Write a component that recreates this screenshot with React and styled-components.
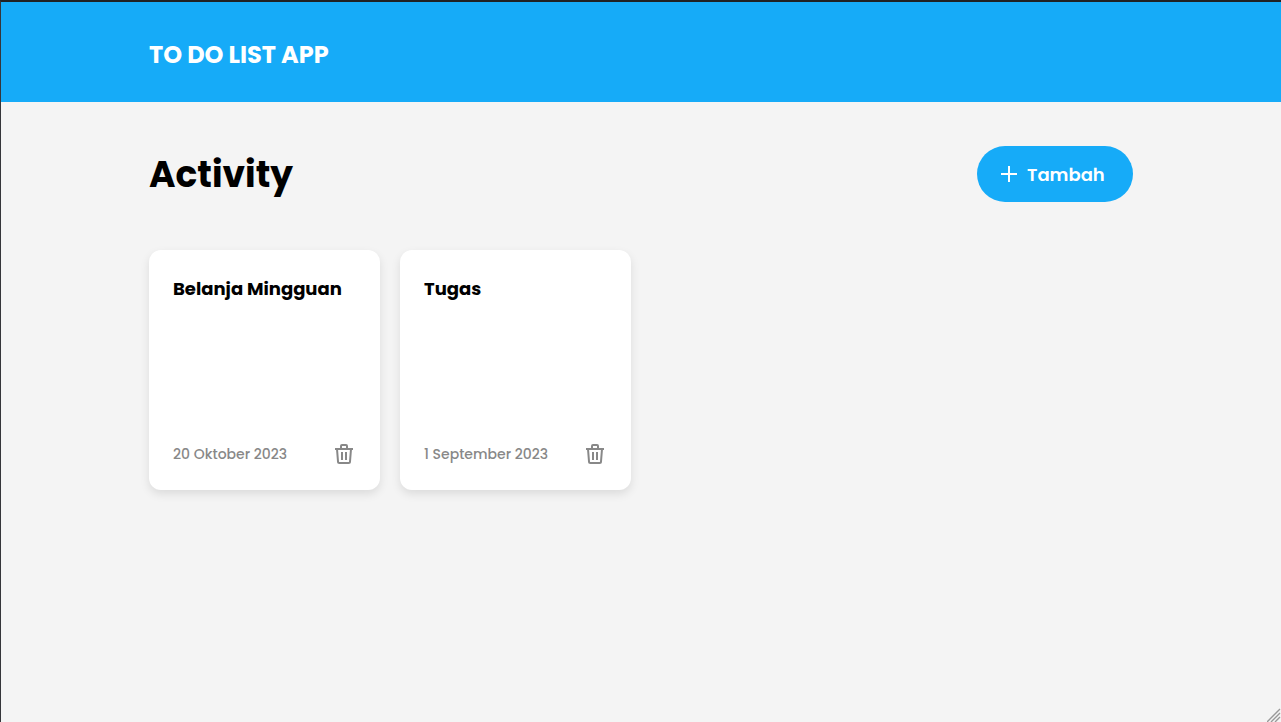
import React from "react";
import styled, { createGlobalStyle } from "styled-components";

const GlobalStyle = createGlobalStyle`
  * { box-sizing: border-box; }
  body {
    margin: 0;
    background: #f4f4f4;
    color: #000;
    font-family: Poppins, Inter, "Open Sans", sans-serif;
  }
`;

const Page = styled.div`
  position: relative;
  min-height: 100vh;
  border-top: 2px solid #202124;
  border-left: 1px solid #35363a;
`;

const Header = styled.header`
  display: flex;
  align-items: center;
  height: 100px;
  padding-top: 6px;
  background: #16abf8;
`;

const Container = styled.div`
  width: 100%;
  max-width: 1000px;
  margin: 0 auto;
  padding: 0 8px;
`;

const Brand = styled.h2`
  margin: 0;
  color: #fff;
  font-size: 24px;
  line-height: 36px;
  font-weight: 700;
`;

const Toolbar = styled.div`
  display: flex;
  align-items: center;
  justify-content: space-between;
  padding: 44px 0 48px;
`;

const Title = styled.h1`
  margin: 0;
  font-size: 36px;
  line-height: 55px;
  font-weight: 700;
`;

const AddButton = styled.button`
  display: flex;
  align-items: center;
  gap: 6px;
  min-width: 156px;
  height: 56px;
  padding: 0 20px;
  border: 0;
  border-radius: 28px;
  background: #16abf8;
  color: #fff;
  font-family: inherit;
  font-size: 18px;
  line-height: 27px;
  font-weight: 600;
  cursor: pointer;
`;

const CardGrid = styled.main`
  display: grid;
  grid-template-columns: repeat(4, 1fr);
  gap: 20px;
`;

const Card = styled.article`
  display: flex;
  flex-direction: column;
  justify-content: space-between;
  height: 240px;
  padding: 24px;
  border-radius: 12px;
  background: #fff;
  box-shadow: 0 4px 10px rgba(0, 0, 0, 0.1);
`;

const CardTitle = styled.h4`
  margin: 0;
  font-size: 18px;
  line-height: 30px;
  font-weight: 700;
  white-space: nowrap;
`;

const CardFooter = styled.footer`
  display: flex;
  align-items: center;
  justify-content: space-between;
`;

const CardDate = styled.time`
  color: #888;
  font-size: 14px;
  line-height: 24px;
  font-weight: 500;
  white-space: nowrap;
`;

const IconButton = styled.button`
  display: flex;
  padding: 0;
  border: 0;
  background: none;
  color: #888;
  cursor: pointer;
`;

const ResizeGrip = styled.svg`
  position: absolute;
  right: 0;
  bottom: 0;
`;

const PlusIcon = () => (
  <svg width="24" height="24" viewBox="0 0 24 24" fill="none" stroke="currentColor" strokeWidth="2" aria-hidden="true">
    <path d="M12 4v16M4 12h16" />
  </svg>
);

const TrashIcon = () => (
  <svg width="24" height="24" viewBox="0 0 24 24" fill="none" stroke="currentColor" strokeWidth="2" aria-hidden="true">
    <path d="M3 7h18M9 7V4a1 1 0 0 1 1-1h4a1 1 0 0 1 1 1v3M5 7l1 12.5a1.5 1.5 0 0 0 1.5 1.5h9a1.5 1.5 0 0 0 1.5-1.5L19 7M10 10v8M14 10v8" />
  </svg>
);

const activities = [
  { title: "Belanja Mingguan", date: "20 Oktober 2023", iso: "2023-10-20" },
  { title: "Tugas", date: "1 September 2023", iso: "2023-09-01" },
];

export default function App() {
  return (
    <Page>
      <GlobalStyle />
      <Header>
        <Container>
          <Brand>TO DO LIST APP</Brand>
        </Container>
      </Header>
      <Container>
        <Toolbar>
          <Title>Activity</Title>
          <AddButton type="button">
            <PlusIcon />
            Tambah
          </AddButton>
        </Toolbar>
        <CardGrid>
          {activities.map((item) => (
            <Card key={item.iso}>
              <CardTitle>{item.title}</CardTitle>
              <CardFooter>
                <CardDate dateTime={item.iso}>{item.date}</CardDate>
                <IconButton type="button" aria-label={`Hapus ${item.title}`}>
                  <TrashIcon />
                </IconButton>
              </CardFooter>
            </Card>
          ))}
        </CardGrid>
      </Container>
      <ResizeGrip width="14" height="14" viewBox="0 0 14 14" stroke="#999" strokeWidth="1.4" aria-hidden="true">
        <path d="M0 14L13 1M4 14l9-9M8 14l5-5" />
      </ResizeGrip>
    </Page>
  );
}
